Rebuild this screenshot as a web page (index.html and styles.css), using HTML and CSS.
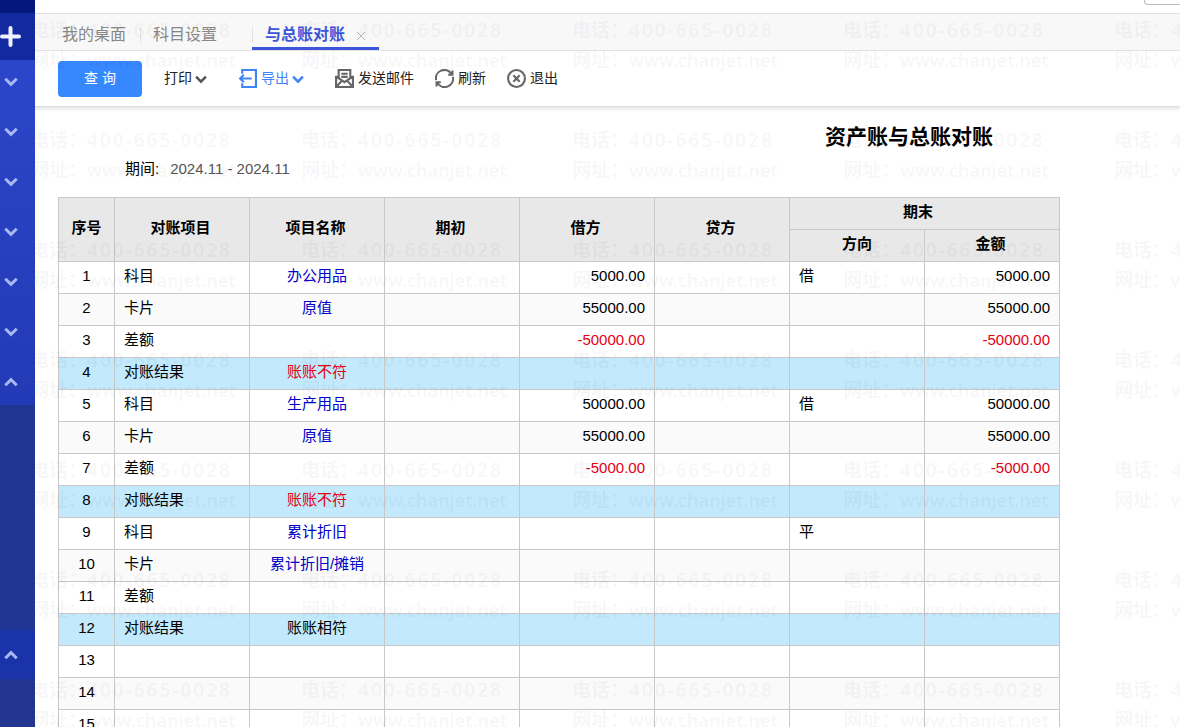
FILE: index.html
```html
<!DOCTYPE html>
<html lang="zh-CN">
<head>
  <meta charset="utf-8">
  <title>资产账与总账对账</title>
  <link rel="stylesheet" href="styles.css">
</head>
<body>
  <svg class="defs" width="0" height="0">
    <symbol id="down" viewBox="0 0 14 10"><path d="M1.300 1.700L7 7.400l5.700-5.700"/></symbol>
    <symbol id="up" viewBox="0 0 14 10"><path d="M1.300 8.300L7 2.600l5.700 5.700"/></symbol>
  </svg>
  <div class="app">
    <nav class="sidebar" aria-label="主菜单">
      <div class="logo"></div>
      <button class="add" aria-label="新增">
        <svg width="21" height="21" viewBox="0 0 21 21"><path d="M10.500 2v17M2 10.500h17"/></svg>
      </button>
      <div class="menu">
        <button aria-label="展开"><svg><use href="#down"/></svg></button>
        <button aria-label="展开"><svg><use href="#down"/></svg></button>
        <button aria-label="展开"><svg><use href="#down"/></svg></button>
        <button aria-label="展开"><svg><use href="#down"/></svg></button>
        <button aria-label="展开"><svg><use href="#down"/></svg></button>
        <button aria-label="展开"><svg><use href="#down"/></svg></button>
        <button aria-label="收起"><svg><use href="#up"/></svg></button>
      </div>
      <div class="submenu"></div>
      <button class="open" aria-label="收起"><svg><use href="#up"/></svg></button>
    </nav>

    <main class="main">
      <div class="topbar"><div class="search"></div></div>
      <div class="tabs">
        <a class="tab" href="#">我的桌面</a>
        <a class="tab second" href="#">科目设置</a>
        <div class="tab active">
          <a href="#">与总账对账</a>
          <button class="close" aria-label="关闭">
            <svg width="10" height="10" viewBox="0 0 10 10"><path d="M1 1l8 8M9 1L1 9"/></svg>
          </button>
        </div>
      </div>

      <div class="toolbar">
        <button class="query">查 询</button>
        <button class="tool print">打印<svg class="arrow"><use href="#down"/></svg></button>
        <button class="tool export">
          <svg class="icon" viewBox="0 0 18 18"><path d="M4 4.500V1h13v16H4v-3.500M1.500 9H13M5.500 5.500L2 9l3.500 3.500"/></svg>
          导出<svg class="arrow"><use href="#down"/></svg>
        </button>
        <button class="tool mail">
          <svg class="icon" viewBox="0 0 18 18"><path d="M3.500 8V1h11v7M1 6.500V17h16V6.500M1 7l8 5.500L17 7M1.500 16.500L6.500 11M16.500 16.500L11.500 11M6 4.500h6M6 7.500h6"/></svg>
          发送邮件
        </button>
        <button class="tool refresh">
          <svg class="icon" viewBox="0 0 18 18"><path d="M1 10.500A8 8 0 0 1 15.500 4.500M17 7.500A8 8 0 0 1 2.500 13.500M16.500 1.500v4h-4M1.500 16.500v-4h4"/></svg>
          刷新
        </button>
        <button class="tool exit">
          <svg class="icon" viewBox="0 0 18 18"><circle cx="9" cy="9" r="8"/><path d="M6 6l6 6M12 6l-6 6"/></svg>
          退出
        </button>
      </div>

      <div class="sheet">
        <h1>资产账与总账对账</h1>
        <p class="period">期间:<span>2024.11 - 2024.11</span></p>
        <table>
          <colgroup>
            <col class="no"><col><col><col><col><col><col><col>
          </colgroup>
          <thead>
            <tr>
              <th rowspan="2">序号</th>
              <th rowspan="2">对账项目</th>
              <th rowspan="2">项目名称</th>
              <th rowspan="2">期初</th>
              <th rowspan="2">借方</th>
              <th rowspan="2">贷方</th>
              <th colspan="2" class="group">期末</th>
            </tr>
            <tr><th>方向</th><th>金额</th></tr>
          </thead>
          <tbody>
            <tr><td>1</td><td>科目</td><td><a href="#">办公用品</a></td><td></td><td>5000.00</td><td></td><td>借</td><td>5000.00</td></tr>
            <tr><td>2</td><td>卡片</td><td><a href="#">原值</a></td><td></td><td>55000.00</td><td></td><td></td><td>55000.00</td></tr>
            <tr><td>3</td><td>差额</td><td></td><td></td><td class="red">-50000.00</td><td></td><td></td><td class="red">-50000.00</td></tr>
            <tr class="result"><td>4</td><td>对账结果</td><td class="red">账账不符</td><td></td><td></td><td></td><td></td><td></td></tr>
            <tr><td>5</td><td>科目</td><td><a href="#">生产用品</a></td><td></td><td>50000.00</td><td></td><td>借</td><td>50000.00</td></tr>
            <tr><td>6</td><td>卡片</td><td><a href="#">原值</a></td><td></td><td>55000.00</td><td></td><td></td><td>55000.00</td></tr>
            <tr><td>7</td><td>差额</td><td></td><td></td><td class="red">-5000.00</td><td></td><td></td><td class="red">-5000.00</td></tr>
            <tr class="result"><td>8</td><td>对账结果</td><td class="red">账账不符</td><td></td><td></td><td></td><td></td><td></td></tr>
            <tr><td>9</td><td>科目</td><td><a href="#">累计折旧</a></td><td></td><td></td><td></td><td>平</td><td></td></tr>
            <tr><td>10</td><td>卡片</td><td><a href="#">累计折旧/摊销</a></td><td></td><td></td><td></td><td></td><td></td></tr>
            <tr><td>11</td><td>差额</td><td></td><td></td><td></td><td></td><td></td><td></td></tr>
            <tr class="result"><td>12</td><td>对账结果</td><td>账账相符</td><td></td><td></td><td></td><td></td><td></td></tr>
            <tr><td>13</td><td></td><td></td><td></td><td></td><td></td><td></td><td></td></tr>
            <tr><td>14</td><td></td><td></td><td></td><td></td><td></td><td></td><td></td></tr>
            <tr><td>15</td><td></td><td></td><td></td><td></td><td></td><td></td><td></td></tr>
          </tbody>
        </table>
      </div>
      <div class="watermark" id="watermark" aria-hidden="true"></div>
    </main>
  </div>
  <script>
    // fill the page with watermark tiles
    var watermark = document.getElementById('watermark');
    var cols = Math.ceil(window.innerWidth / 271);
    var rows = Math.ceil(window.innerHeight / 110);
    watermark.style.gridTemplateColumns = 'repeat(' + cols + ', 271px)';
    for (var i = 0; i < cols * rows; i++) {
      var tile = document.createElement('div');
      tile.innerHTML = '<p>电话：<span class="phone">400-665-0028</span></p><p>网址：<span class="site">www.chanjet.net</span></p>';
      watermark.appendChild(tile);
    }
  </script>
</body>
</html>
```

FILE: styles.css
```css
* {
  box-sizing: border-box;
}

body {
  margin: 0;
  overflow: hidden;
  font-family: "Liberation Sans", "Noto Sans CJK SC", sans-serif;
  font-size: 15px;
  color: #000;
  background: #fff;
}

button {
  border: none;
  padding: 0;
  background: none;
  font-family: inherit;
  cursor: pointer;
}

a {
  text-decoration: none;
}

svg {
  fill: none;
  stroke: currentColor;
  stroke-width: 2;
}

.defs {
  position: absolute;
}

.app {
  display: flex;
  height: 100vh;
}

/* sidebar */
.sidebar {
  display: flex;
  flex-direction: column;
  flex: none;
  width: 35px;
  background: #22368f;
}

.sidebar svg {
  display: block;
  stroke-width: 3;
}

.logo {
  height: 13px;
  background: #04177a;
}

.add {
  height: 47px;
  color: #eef1ff;
  background: #1229a0;
}

.sidebar .add svg {
  stroke-width: 4;
  stroke-linecap: round;
}

.menu {
  display: grid;
  grid-auto-rows: 50px;
  height: 345px;
  overflow: hidden;
  background: linear-gradient(#2b46c9, #233ab6);
}

.menu button,
.open {
  padding: 0 0 7px 4px;
  color: #a9b8f2;
}

.menu svg,
.open svg {
  width: 14px;
  height: 10px;
}

.submenu {
  height: 225px;
  background: #213594;
}

.open {
  height: 49px;
  padding-bottom: 0;
  background: #1a33a9;
}

/* main area */
.main {
  position: relative;
  flex: 1;
  min-width: 0;
  overflow: hidden;
}

.topbar {
  display: flex;
  justify-content: flex-end;
  height: 13px;
}

.search {
  width: 36px;
  height: 5px;
  border: 1px solid #bbb;
  border-width: 0 0 1px 1px;
  border-radius: 0 0 0 4px;
}

.tabs {
  display: flex;
  height: 38px;
  padding-left: 27px;
  border-top: 1px solid #dedede;
  border-bottom: 1px solid #e4e4ea;
  background: #f8f8f8;
}

.tab {
  height: 36px;
  line-height: 41px;
  font-size: 16px;
  color: #888;
}

.second {
  width: 112px;
  margin-left: 14px;
  padding-left: 13px;
  background: linear-gradient(#e2e2e2, #e2e2e2) 0 13px / 1px 16px no-repeat;
}

.active {
  display: flex;
  width: 127px;
  padding-left: 13px;
  border-bottom: 3px solid #3d55d8;
  background: linear-gradient(#e2e2e2, #e2e2e2) 0 13px / 1px 16px no-repeat;
}

.active a {
  font-weight: bold;
  color: #3d55d8;
}

.close {
  margin-left: 11px;
  padding-top: 10px;
  line-height: 0;
  color: #b5b5b5;
}

.close svg {
  stroke-width: 1;
}

.toolbar {
  display: flex;
  align-items: center;
  height: 56px;
  padding-left: 23px;
  border-bottom: 1px solid #ddd;
  box-shadow: 0 2px 4px rgba(0, 0, 0, 0.12);
}

.query {
  width: 84px;
  height: 36px;
  padding-bottom: 3px;
  border-radius: 4px;
  font-size: 14px;
  color: #fff;
  background: #3788ff;
}

.tool {
  display: flex;
  align-items: center;
  height: 36px;
  padding-bottom: 2px;
  line-height: 20px;
  font-size: 14px;
  color: #222;
}

.icon {
  width: 19px;
  height: 19px;
  margin: 2px 4px 0 0;
  color: #666;
}

.arrow {
  width: 12px;
  height: 9px;
  margin: 3px 0 0 3px;
  stroke-width: 3;
  color: #555;
}

.print {
  margin-left: 22px;
}

.export {
  margin-left: 31px;
}

.export,
.export svg {
  color: #3f83f8;
}

.mail {
  margin-left: 31px;
}

.refresh,
.exit {
  margin-left: 21px;
}

/* report */
.sheet {
  width: 1748px;
  padding: 14px 23px 0;
}

h1 {
  margin: 0;
  line-height: 32px;
  font-size: 21px;
  text-align: center;
}

.period {
  margin: 4px 0 16px;
  padding-left: 67px;
  line-height: 24px;
}

.period span {
  margin-left: 11px;
  color: #555;
}

table {
  width: 1002px;
  table-layout: fixed;
  border-collapse: collapse;
}

col {
  width: 135px;
}

.no {
  width: 56px;
}

th,
td {
  height: 32px;
  padding: 0 9px 4px;
  border: 1px solid #c8c8c8;
  line-height: 22px;
}

th {
  padding-right: 12px;
  background: #e8e8e8;
}

th:first-child {
  padding-right: 9px;
}

th.group {
  padding-right: 22px;
}

td:nth-child(1),
td:nth-child(3) {
  text-align: center;
}

td:nth-child(4),
td:nth-child(5),
td:nth-child(6),
td:nth-child(8) {
  text-align: right;
}

td a {
  color: #0000c8;
}

tbody tr:nth-child(even) {
  background: #fafafa;
}

tbody tr.result {
  background: #c2eafc;
}

.red {
  color: #e60012;
}

/* watermark lies over the whole main area */
.watermark {
  position: absolute;
  top: 15px;
  left: -5px;
  display: grid;
  grid-auto-rows: 110px;
  font-family: "Noto Sans", "Noto Sans CJK SC", sans-serif;
  font-size: 19px;
  font-weight: 600;
  color: rgba(0, 0, 0, 0.05);
  pointer-events: none;
}

.watermark p {
  display: flex;
  margin: 0;
  line-height: 30px;
}

.phone {
  letter-spacing: 2px;
}

.site {
  font-size: 18px;
}
```
